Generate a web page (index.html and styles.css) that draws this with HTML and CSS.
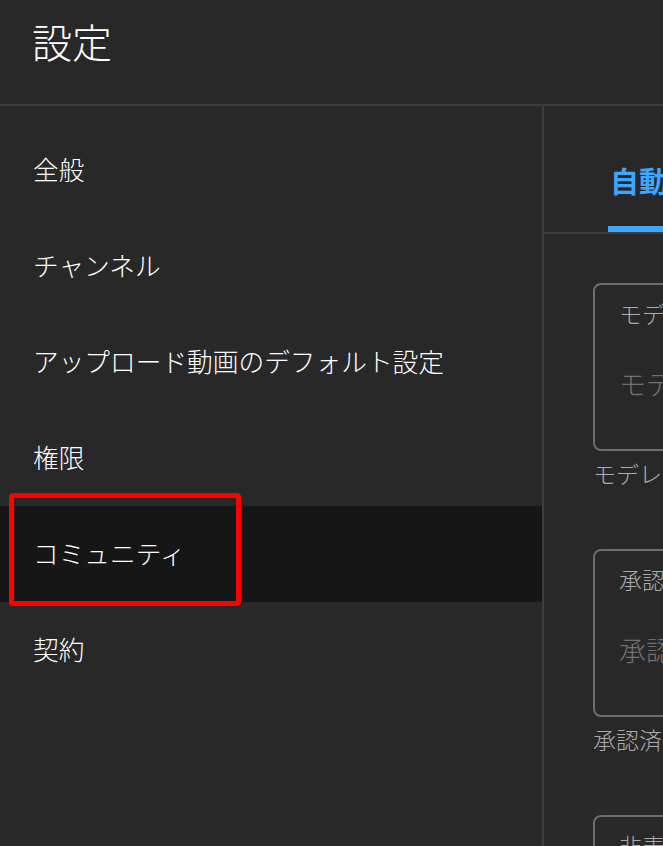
FILE: index.html
```html
<!DOCTYPE html>
<html lang="ja">
<head>
<meta charset="utf-8">
<title>設定</title>
<link rel="stylesheet" href="styles.css">
</head>
<body>
<div class="app">
  <header class="header">
    <h1 class="title">設定</h1>
  </header>
  <div class="main">
    <nav class="sidebar">
      <div class="nav-item">全般</div>
      <div class="nav-item">チャンネル</div>
      <div class="nav-item">アップロード動画のデフォルト設定</div>
      <div class="nav-item">権限</div>
      <div class="nav-item selected">コミュニティ<span class="highlight"></span></div>
      <div class="nav-item">契約</div>
    </nav>
    <section class="panel">
      <div class="tabs">
        <div class="tab active">自動フィルタ</div>
        <div class="tab">デフォルト</div>
      </div>
      <div class="content">
        <div class="field">
          <div class="box">
            <div class="label">モデレーター</div>
            <div class="placeholder">モデレーターを追加</div>
          </div>
          <div class="helper">モデレーターはチャンネルのコメントを管理できます</div>
        </div>
        <div class="field">
          <div class="box">
            <div class="label">承認済みユーザー</div>
            <div class="placeholder">承認済みユーザーを追加</div>
          </div>
          <div class="helper">承認済みユーザーのコメントは自動的に公開されます</div>
        </div>
        <div class="field">
          <div class="box">
            <div class="label">非表示のユーザー</div>
            <div class="placeholder">非表示のユーザーを追加</div>
          </div>
          <div class="helper">非表示のユーザーのコメントは表示されません</div>
        </div>
      </div>
    </section>
  </div>
</div>
</body>
</html>
```
FILE: styles.css
```css
html, body {
  margin: 0;
  padding: 0;
  background: #282828;
  overflow: hidden;
}
body {
  width: 663px;
  height: 846px;
  font-family: "Noto Sans CJK JP", "Noto Sans", sans-serif;
  font-weight: 300;
  color: #ffffff;
}
.app {
  display: flex;
  flex-direction: column;
  height: 846px;
}
.header {
  height: 87px;
  padding: 17px 0 0 32px;
  border-bottom: 2px solid #3d3d3d;
  flex-shrink: 0;
}
.title {
  margin: 0;
  font-size: 40px;
  font-weight: 300;
  line-height: 48px;
}
.main {
  display: flex;
  flex: 1;
  min-height: 0;
}
.sidebar {
  width: 542px;
  flex-shrink: 0;
  border-right: 2px solid #3d3d3d;
  padding-top: 16px;
}
.nav-item {
  position: relative;
  height: 96px;
  box-sizing: border-box;
  padding: 0 0 3px 33px;
  display: flex;
  align-items: center;
  font-size: 25.7px;
  line-height: 36px;
  white-space: nowrap;
}
.nav-item.selected {
  background: #161616;
}
.highlight {
  position: absolute;
  top: -13px;
  left: 9px;
  width: 232px;
  height: 113px;
  box-sizing: border-box;
  border: 5px solid #ff0000;
  border-radius: 4px;
}
.panel {
  flex: 1;
  min-width: 0;
  overflow: hidden;
}
.tabs {
  display: flex;
  gap: 40px;
  padding-left: 64px;
  border-bottom: 2px solid #3d3d3d;
}
.tab {
  padding: 54px 3px 26px 2px;
  font-size: 29px;
  line-height: 40px;
  font-weight: 700;
  color: #aaaaaa;
  white-space: nowrap;
  border-bottom: 6px solid transparent;
}
.tab.active {
  color: #3ea6ff;
  border-bottom-color: #3ea6ff;
  border-radius: 3px 3px 0 0;
}
.content {
  padding: 49px 0 0 49px;
  display: flex;
  flex-direction: column;
  gap: 61px;
}
.field {
  width: 600px;
  flex-shrink: 0;
}
.box {
  height: 168px;
  box-sizing: border-box;
  border: 2px solid #6d6d6d;
  border-radius: 8px;
  padding: 13px 24px 0;
}
.label {
  font-size: 23px;
  line-height: 30px;
  color: #aaaaaa;
  white-space: nowrap;
}
.placeholder {
  margin-top: 38px;
  font-size: 27px;
  line-height: 36px;
  color: #717171;
  white-space: nowrap;
}
.helper {
  margin-top: 7px;
  font-size: 23px;
  line-height: 30px;
  color: #aaaaaa;
  white-space: nowrap;
}
```
